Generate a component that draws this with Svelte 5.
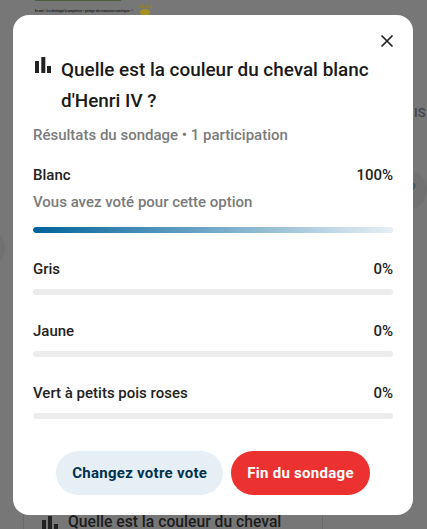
<script>
  const results = [
    { label: 'Blanc', pct: 100, voted: true },
    { label: 'Gris', pct: 0 },
    { label: 'Jaune', pct: 0 },
    { label: 'Vert à petits pois roses', pct: 0 }
  ];
</script>

<div class="page">
  <div class="behind-top">
    <div class="green-line"></div>
    <div class="behind-note">
      <span>En sale ! Je a développé la compétence « partager des ressources numériques » !</span>
      <div class="medal">
        <span>BRAVO</span>
        <i></i>
      </div>
    </div>
  </div>
  <span class="side-text">IS</span>
  <div class="side-circle left"></div>
  <div class="side-circle right"><span>?</span></div>

  <div class="behind-card">
    <svg class="poll-icon small" viewBox="0 0 16 16" aria-hidden="true"><rect x="0" y="4" width="4" height="12"/><rect x="6" y="0" width="4" height="16"/><rect x="12" y="8" width="4" height="8"/></svg>
    <span>Quelle est la couleur du cheval</span>
  </div>

  <div class="modal">
    <button class="close" aria-label="Fermer">
      <svg viewBox="0 0 14 14" aria-hidden="true"><path d="M1.5 1.5 12.5 12.5M12.5 1.5 1.5 12.5"/></svg>
    </button>

    <div class="title">
      <svg class="poll-icon" viewBox="0 0 16 16" aria-hidden="true"><rect x="0" y="4" width="4" height="12"/><rect x="6.3" y="0" width="4" height="16"/><rect x="12" y="9" width="4" height="7"/></svg>
      <h2>Quelle est la couleur du cheval blanc d'Henri IV ?</h2>
    </div>

    <p class="summary">Résultats du sondage • 1 participation</p>

    <div class="results">
      {#each results as r}
        <div class="result">
          <div class="row">
            <span>{r.label}</span>
            <span>{r.pct}%</span>
          </div>
          {#if r.voted}
            <div class="voted">Vous avez voté pour cette option</div>
          {/if}
          <div class="track">
            <div class="fill" style="width: {r.pct}%"></div>
          </div>
        </div>
      {/each}
    </div>

    <div class="actions">
      <button class="btn secondary">Changez votre vote</button>
      <button class="btn danger">Fin du sondage</button>
    </div>
  </div>
</div>

<style>
  :global(body) {
    margin: 0;
    font-family: Roboto, "Liberation Sans", sans-serif;
  }
  .page {
    position: relative;
    width: 427px;
    height: 529px;
    overflow: hidden;
    background: #777;
  }
  .behind-top {
    position: absolute;
    top: 0;
    left: 35px;
  }
  .green-line {
    width: 86px;
    height: 1px;
    background: #4d5e3f;
  }
  .behind-note {
    display: flex;
    gap: 6px;
    margin-top: 4px;
    font-size: 2.7px;
    font-weight: 700;
    color: #222;
    align-items: flex-start;
  }
  .behind-note > span {
    margin-top: 4px;
    white-space: nowrap;
  }
  .medal {
    display: flex;
    flex-direction: column;
    align-items: center;
    color: #94801f;
    font-size: 4px;
    line-height: 4px;
  }
  .medal i {
    width: 10px;
    height: 7px;
    border-radius: 50%;
    background: #a8901f;
  }
  .side-text {
    position: absolute;
    top: 105px;
    left: 414px;
    font-size: 13px;
    font-weight: 500;
    color: #444;
  }
  .side-circle {
    position: absolute;
    width: 40px;
    height: 40px;
    border-radius: 50%;
    background: #717171;
  }
  .side-circle.left {
    left: -35px;
    top: 228px;
  }
  .side-circle.right {
    left: 387px;
    top: 170px;
    box-sizing: border-box;
    padding-left: 22px;
    line-height: 38px;
    font-size: 14px;
    font-weight: 500;
    color: #3c5566;
  }
  .behind-card {
    position: absolute;
    left: 23px;
    top: 500px;
    width: 300px;
    height: 60px;
    box-sizing: border-box;
    border: 1px solid #6a6a6a;
    padding: 13px 0 0 18px;
    display: flex;
    gap: 10px;
    align-items: flex-start;
    font-size: 15.7px;
    line-height: 16px;
    font-weight: 500;
    color: #1c1c1c;
  }
  .poll-icon {
    fill: #222;
    flex: none;
  }
  .poll-icon.small {
    width: 16px;
    height: 16px;
    margin-top: 2px;
  }
  .modal {
    position: absolute;
    left: 13px;
    top: 15px;
    width: 400px;
    height: 500px;
    box-sizing: border-box;
    padding: 39px 20px 0;
    background: #fff;
    border-radius: 16px;
    display: flex;
    flex-direction: column;
  }
  .close {
    position: absolute;
    top: 19px;
    right: 19px;
    width: 14px;
    height: 14px;
    padding: 0;
    border: 0;
    background: none;
  }
  .close svg {
    display: block;
    width: 14px;
    height: 14px;
    fill: none;
    stroke: #222;
    stroke-width: 1.7;
  }
  .title {
    display: flex;
    gap: 10px;
    align-items: flex-start;
    padding-left: 2px;
  }
  .title .poll-icon {
    width: 16px;
    height: 16px;
    margin-top: 3px;
  }
  h2 {
    margin: 0;
    font-size: 18.9px;
    line-height: 31px;
    font-weight: 500;
    color: #1a1a1a;
  }
  .summary {
    margin: 9px 0 0;
    font-size: 15px;
    line-height: 20px;
    font-weight: 500;
    color: #7b7b7b;
  }
  .results {
    margin-top: 19px;
    display: flex;
    flex-direction: column;
    gap: 25px;
  }
  .row {
    display: flex;
    justify-content: space-between;
    padding-top: 1px;
    font-size: 15px;
    line-height: 20px;
    font-weight: 500;
    color: #222;
  }
  .voted {
    margin-top: 7px;
    margin-bottom: 15px;
    font-size: 15px;
    line-height: 20px;
    font-weight: 500;
    color: #7b7b7b;
  }
  .row + .track {
    margin-top: 10px;
  }
  .track {
    height: 6px;
    border-radius: 3px;
    background: #ececec;
    overflow: hidden;
  }
  .fill {
    height: 100%;
    border-radius: 3px;
    background: linear-gradient(90deg, #00629b, #e6eff5);
  }
  .actions {
    margin-top: 32px;
    display: flex;
    justify-content: center;
    gap: 8px;
  }
  .btn {
    height: 44px;
    border: 0;
    border-radius: 22px;
    padding: 0 16px;
    font-family: inherit;
    font-size: 15px;
    letter-spacing: 0.28px;
    font-weight: 700;
  }
  .secondary {
    background: #e6eff5;
    color: #00324f;
  }
  .danger {
    background: #ec3230;
    color: #fff;
  }
</style>
